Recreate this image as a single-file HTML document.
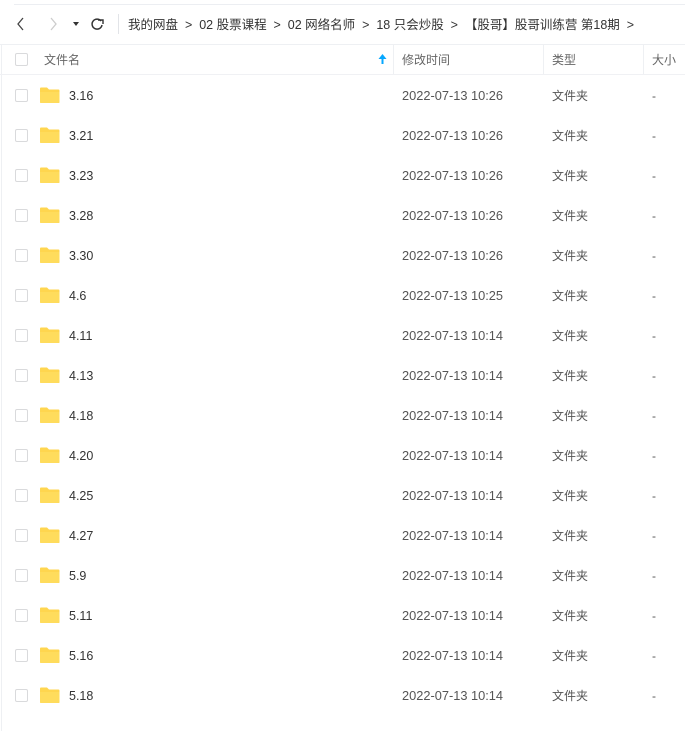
<!DOCTYPE html>
<html><head><meta charset="utf-8"><style>
body{margin:0;width:685px;height:731px;background:#fff;font-family:"Liberation Sans","Noto Sans CJK SC",sans-serif;position:relative;overflow:hidden;color:#333}
.abs{position:absolute}
.t{font-size:12px;white-space:nowrap;line-height:16px}
.cb{position:absolute;left:15px;width:11px;height:11px;border:1px solid #d9dadc;border-radius:2px;background:#fff}
.row{position:absolute;left:0;width:685px;height:40px}
.fold{position:absolute;left:39px;width:21px;height:16px}
</style></head><body>
<div class="abs" style="left:14px;top:4px;width:671px;height:1px;background:#eceef2"></div>
<div class="abs" style="left:1px;top:44px;width:1px;height:687px;background:#eef0f3"></div>
<svg class="abs" style="left:15px;top:16px" width="90" height="16">
<path d="M8 2 L3 8 L8 14" fill="none" stroke="#444" stroke-width="1.3"/>
<path d="M36 2 L41 8 L36 14" fill="none" stroke="#ccc" stroke-width="1.3"/>
<path d="M58 6 L64 6 L61 10 Z" fill="#333"/>
<path d="M86 5 A5 5 0 1 0 87 9" fill="none" stroke="#333" stroke-width="1.5"/><path d="M83 4 L88 4 L88 8" fill="none" stroke="#333" stroke-width="1.4"/>
</svg>
<div class="abs" style="left:118px;top:14px;width:1px;height:20px;background:#e2e4e8"></div>
<div class="abs t" style="left:128px;top:17px;font-size:12.5px;color:#333">我的网盘 &nbsp;&gt;&nbsp; 02 股票课程 &nbsp;&gt;&nbsp; 02 网络名师 &nbsp;&gt;&nbsp; 18 只会炒股 &nbsp;&gt;&nbsp; 【股哥】股哥训练营 第18期 &nbsp;&gt;</div>
<div class="abs" style="left:0;top:44px;width:685px;height:1px;background:#eef0f3"></div>
<div class="abs" style="left:0;top:74px;width:685px;height:1px;background:#f0f1f4"></div>
<div class="cb" style="top:53px"></div>
<div class="abs t" style="left:44px;top:52px;color:#666">文件名</div>
<svg class="abs" style="left:378px;top:54px" width="9" height="10"><path d="M4.5 0 L8.5 5 L5.5 5 L5.5 10 L3.5 10 L3.5 5 L0.5 5Z" fill="#06a7ff"/></svg>
<div class="abs" style="left:393px;top:45px;width:1px;height:29px;background:#eef0f3"></div>
<div class="abs t" style="left:402px;top:52px;color:#666">修改时间</div>
<div class="abs" style="left:543px;top:45px;width:1px;height:29px;background:#eef0f3"></div>
<div class="abs t" style="left:552px;top:52px;color:#666">类型</div>
<div class="abs" style="left:643px;top:45px;width:1px;height:29px;background:#eef0f3"></div>
<div class="abs t" style="left:652px;top:52px;color:#666">大小</div>
<div id="rows"></div>
<script>
var d=[["3.16","10:26"],["3.21","10:26"],["3.23","10:26"],["3.28","10:26"],["3.30","10:26"],["4.6","10:25"],["4.11","10:14"],["4.13","10:14"],["4.18","10:14"],["4.20","10:14"],["4.25","10:14"],["4.27","10:14"],["5.9","10:14"],["5.11","10:14"],["5.16","10:14"],["5.18","10:14"]];
var h="";d.forEach(function(r,i){var y=75+i*40;
h+='<div class="row" style="top:'+y+'px"><div class="cb" style="top:14px"></div><svg class="fold" style="top:12px" viewBox="0 0 21 16"><path d="M1 1.5 Q1 0.5 2 0.5 L8 0.5 L10 2.5 L19.5 2.5 Q20.5 2.5 20.5 3.5 L20.5 15 Q20.5 16 19.5 16 L2 16 Q1 16 1 15Z" fill="#ffd64f"/><path d="M1 5 L20.5 5 L20.5 15 Q20.5 16 19.5 16 L2 16 Q1 16 1 15Z" fill="#ffdc5c"/></svg><div class="abs t" style="left:69px;top:13px;font-size:12.5px;color:#333">'+r[0]+'</div><div class="abs t" style="left:402px;top:13px;font-size:12.8px;color:#555">2022-07-13 '+r[1]+'</div><div class="abs t" style="left:552px;top:13px;color:#555">文件夹</div><div class="abs t" style="left:652px;top:13px;color:#555">-</div></div>';});
document.getElementById("rows").innerHTML=h;
</script>
</body></html>
